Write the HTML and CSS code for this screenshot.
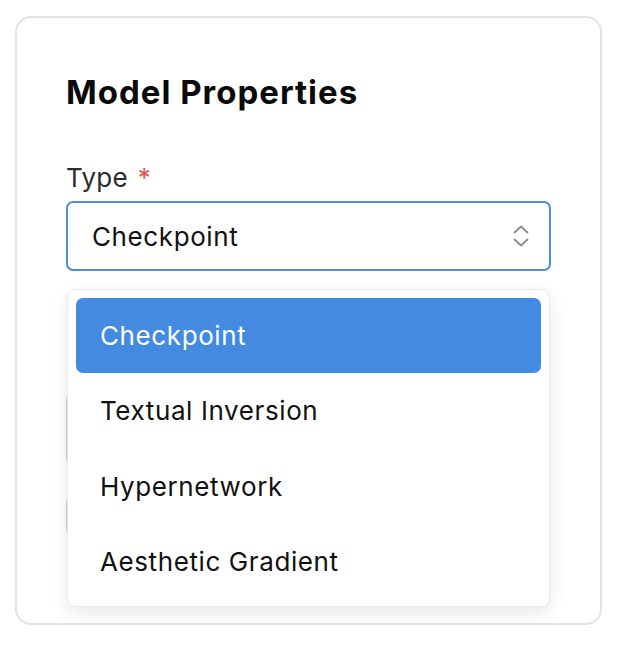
FILE: index.html
```html
<!DOCTYPE html>
<html lang="en">
<head>
<meta charset="utf-8">
<title>Model Properties</title>
<link rel="stylesheet" href="styles.css">
</head>
<body>
<div class="card">
  <h2 class="title">Model Properties</h2>
  <div class="field">
    <label class="label">Type <span class="req">*</span></label>
    <div class="select-wrap">
      <div class="select">
        <span>Checkpoint</span>
        <svg class="chev" width="16" height="24" viewBox="0 0 16 24" fill="none" stroke="#8b8b90" stroke-width="1.8" stroke-linecap="round" stroke-linejoin="round">
          <path d="M1.5 8.5 L8 2.5 L14.5 8.5"/>
          <path d="M1.5 15.5 L8 21.5 L14.5 15.5"/>
        </svg>
      </div>
      <ul class="menu">
        <li class="opt active">Checkpoint</li>
        <li class="opt">Textual Inversion</li>
        <li class="opt">Hypernetwork</li>
        <li class="opt">Aesthetic Gradient</li>
      </ul>
    </div>
  </div>
  <div class="ghost ghost-a"></div>
  <div class="ghost ghost-b"></div>
</div>
</body>
</html>
```

FILE: styles.css
```css
* { box-sizing: border-box; }
html, body { margin: 0; padding: 0; background: #fff; }
body {
  font-family: Inter, "Noto Sans", "Liberation Sans", sans-serif;
  color: #111;
}
.card {
  margin: 16px 0 0 15px;
  width: 587px;
  height: 609px;
  border: 2px solid #e1e3e7;
  border-radius: 16px;
  padding: 55px 49px 0 49px;
  display: flex;
  flex-direction: column;
}
.title {
  margin: 0;
  font-size: 33px;
  line-height: 38px;
  font-weight: 700;
  color: #0a0a0a;
  letter-spacing: 1px;
}
.field {
  margin-top: 52px;
  display: flex;
  flex-direction: column;
}
.label {
  font-size: 26px;
  line-height: 30px;
  color: #2b2b2e;
  font-weight: 400;
  letter-spacing: 0.3px;
}
.req { color: #e5524d; margin-left: 2px; }
.select-wrap {
  position: relative;
  margin-top: 8px;
}
.select {
  height: 70px;
  border: 2px solid #4a8de0;
  border-radius: 7px;
  padding: 0 20px 0 24px;
  display: flex;
  align-items: center;
  justify-content: space-between;
  font-size: 26px;
  letter-spacing: 0.6px;
  color: #111;
}
.chev { display: block; }
.menu {
  position: absolute;
  left: 1px;
  right: 1px;
  top: 88px;
  margin: 0;
  padding: 8px 8px 7px;
  list-style: none;
  background: #fff;
  border: 1px solid #e9e9ee;
  border-radius: 8px;
  box-shadow: 0 6px 18px rgba(0, 0, 0, 0.09);
  z-index: 2;
}
.opt {
  height: 75.3px;
  display: flex;
  align-items: center;
  padding-left: 24px;
  font-size: 26px;
  letter-spacing: 0.6px;
  color: #111;
  border-radius: 7px;
}
.opt.active {
  background: #438be0;
  color: #fff;
}
.ghost {
  border: 2px solid #cfcfd4;
  border-right: 0;
  border-radius: 7px 0 0 7px;
  margin-right: 4px;
}
.ghost-a { margin-top: 121px; height: 73px; }
.ghost-b { margin-top: 30px; height: 41px; }
```
